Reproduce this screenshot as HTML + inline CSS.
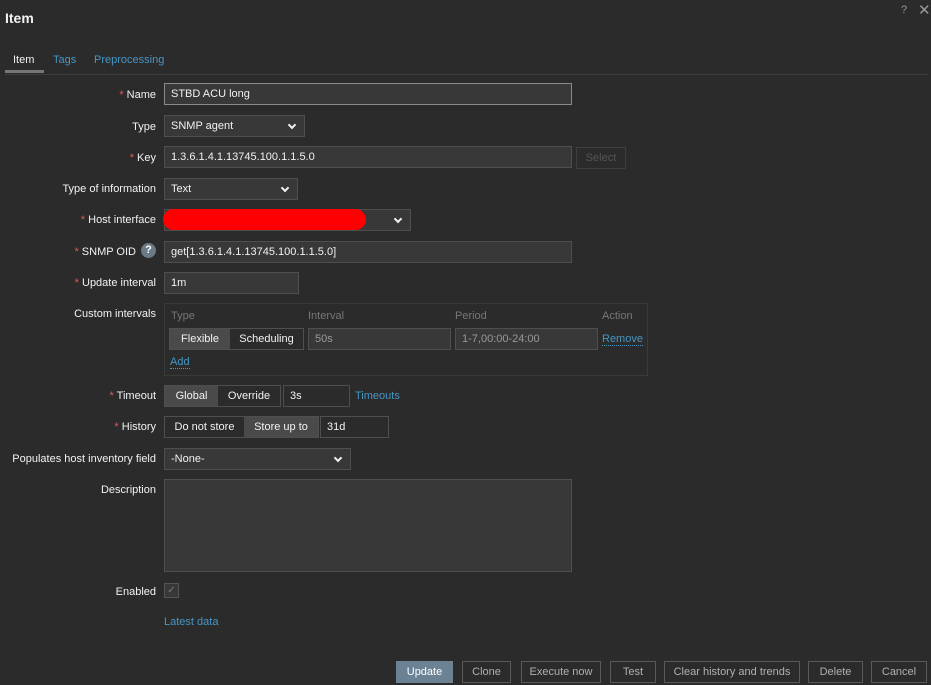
<!DOCTYPE html>
<html><head><style>
*{box-sizing:border-box;margin:0;padding:0}
body{width:931px;height:685px;background:#2b2b2b;font-family:"Liberation Sans",Arial,sans-serif;font-size:11px;color:#f2f2f2;position:relative;overflow:hidden}
.a{position:absolute}
.lbl{position:absolute;right:775px;text-align:right;white-space:nowrap;margin-top:1px}
.st{color:#e45959}
.in{position:absolute;height:22px;background:#383838;border:1px solid #4f4f4f;padding:0 6px;line-height:21px;white-space:nowrap}
.dd::after{content:"";position:absolute;right:9px;top:6px;width:4px;height:4px;border-right:2px solid #f2f2f2;border-bottom:2px solid #f2f2f2;transform:rotate(45deg)}
.seg{position:absolute;height:22px;border:1px solid #4f4f4f;display:flex}
.seg span{line-height:21px;background:#2b2b2b;text-align:center}
.seg span.on{background:#4a4a4a}
.lnk{color:#4796c4}
.btn{position:absolute;top:661px;height:22px;border:1px solid #5a5a5a;color:#b0b0b0;text-align:center;line-height:21px}
.gh{color:#777}
</style></head><body>
<div class="a" style="left:5px;top:10px;font-size:14px;font-weight:bold;color:#f2f2f2">Item</div>
<div class="a" style="left:901px;top:4px;color:#999;font-size:11px">?</div>
<div class="a" style="left:918px;top:1px;color:#999;font-size:15px">✕</div>
<div class="a" style="left:13px;top:54px">Item</div>
<div class="a lnk" style="left:53px;top:54px">Tags</div>
<div class="a lnk" style="left:94px;top:54px">Preprocessing</div>
<div class="a" style="left:5px;top:70px;width:39px;height:3px;background:#767676"></div>
<div class="a" style="left:5px;top:74px;width:923px;height:1px;background:#3d3d3d"></div>

<div class="lbl" style="top:88px"><span class="st">* </span>Name</div>
<div class="in" style="left:164px;top:83px;width:408px;border-color:#8a8a8a">STBD ACU long</div>
<div class="lbl" style="top:120px">Type</div>
<div class="in dd" style="left:164px;top:115px;width:141px">SNMP agent</div>
<div class="lbl" style="top:151px"><span class="st">* </span>Key</div>
<div class="in" style="left:164px;top:146px;width:408px">1.3.6.1.4.1.13745.100.1.1.5.0</div>
<div class="in" style="left:576px;top:147px;width:50px;background:#2b2b2b;color:#555;border-color:#3f3f3f;text-align:center;padding:0">Select</div>
<div class="lbl" style="top:182px">Type of information</div>
<div class="in dd" style="left:164px;top:178px;width:134px">Text</div>
<div class="lbl" style="top:213px"><span class="st">* </span>Host interface</div>
<div class="in dd" style="left:164px;top:209px;width:247px"></div>
<div class="a" style="left:163px;top:209px;width:203px;height:21px;background:#ff0000;border-radius:11px"></div>
<div class="lbl" style="top:245px;right:795px"><span class="st">* </span>SNMP OID</div>
<div class="a" style="left:141px;top:243px;width:15px;height:15px;border-radius:50%;background:#6a7a86;color:#fff;font-size:11px;font-weight:bold;text-align:center;line-height:15px">?</div>
<div class="in" style="left:164px;top:241px;width:408px">get[1.3.6.1.4.1.13745.100.1.1.5.0]</div>
<div class="lbl" style="top:276px"><span class="st">* </span>Update interval</div>
<div class="in" style="left:164px;top:272px;width:135px">1m</div>
<div class="lbl" style="top:307px">Custom intervals</div>
<div class="a" style="left:164px;top:303px;width:484px;height:73px;border:1px solid #3a3a3a"></div>
<div class="a gh" style="left:171px;top:310px">Type</div>
<div class="a gh" style="left:308px;top:310px">Interval</div>
<div class="a gh" style="left:455px;top:310px">Period</div>
<div class="a gh" style="left:602px;top:310px">Action</div>
<div class="seg" style="left:169px;top:328px"><span class="on" style="width:60px">Flexible</span><span style="width:73px">Scheduling</span></div>
<div class="in" style="left:308px;top:328px;width:143px;color:#999">50s</div>
<div class="in" style="left:455px;top:328px;width:143px;color:#999">1-7,00:00-24:00</div>
<div class="a lnk" style="left:602px;top:333px;border-bottom:1px dotted #4796c4">Remove</div>
<div class="a lnk" style="left:170px;top:356px;border-bottom:1px dotted #4796c4">Add</div>
<div class="lbl" style="top:389px"><span class="st">* </span>Timeout</div>
<div class="seg" style="left:164px;top:385px"><span class="on" style="width:53px">Global</span><span style="width:62px">Override</span></div>
<div class="in" style="left:283px;top:385px;width:67px;background:#2b2b2b">3s</div>
<div class="a lnk" style="left:355px;top:390px">Timeouts</div>
<div class="lbl" style="top:420px"><span class="st">* </span>History</div>
<div class="seg" style="left:164px;top:416px"><span style="width:79px">Do not store</span><span class="on" style="width:74px">Store up to</span></div>
<div class="in" style="left:320px;top:416px;width:69px;background:#2b2b2b">31d</div>
<div class="lbl" style="top:452px">Populates host inventory field</div>
<div class="in dd" style="left:164px;top:448px;width:187px">-None-</div>
<div class="lbl" style="top:483px">Description</div>
<div class="in" style="left:164px;top:479px;width:408px;height:93px"></div>
<div class="lbl" style="top:585px">Enabled</div>
<div class="a" style="left:164px;top:583px;width:15px;height:15px;border:1px solid #555;background:#383838;color:#777;font-size:10px;text-align:center;line-height:13px">✓</div>
<div class="a lnk" style="left:164px;top:616px">Latest data</div>

<div class="btn" style="left:396px;width:57px;background:#6b8294;border-color:#6b8294;color:#fff">Update</div>
<div class="btn" style="left:462px;width:49px">Clone</div>
<div class="btn" style="left:521px;width:80px">Execute now</div>
<div class="btn" style="left:610px;width:46px">Test</div>
<div class="btn" style="left:664px;width:136px">Clear history and trends</div>
<div class="btn" style="left:808px;width:55px">Delete</div>
<div class="btn" style="left:871px;width:56px">Cancel</div>
</body></html>
